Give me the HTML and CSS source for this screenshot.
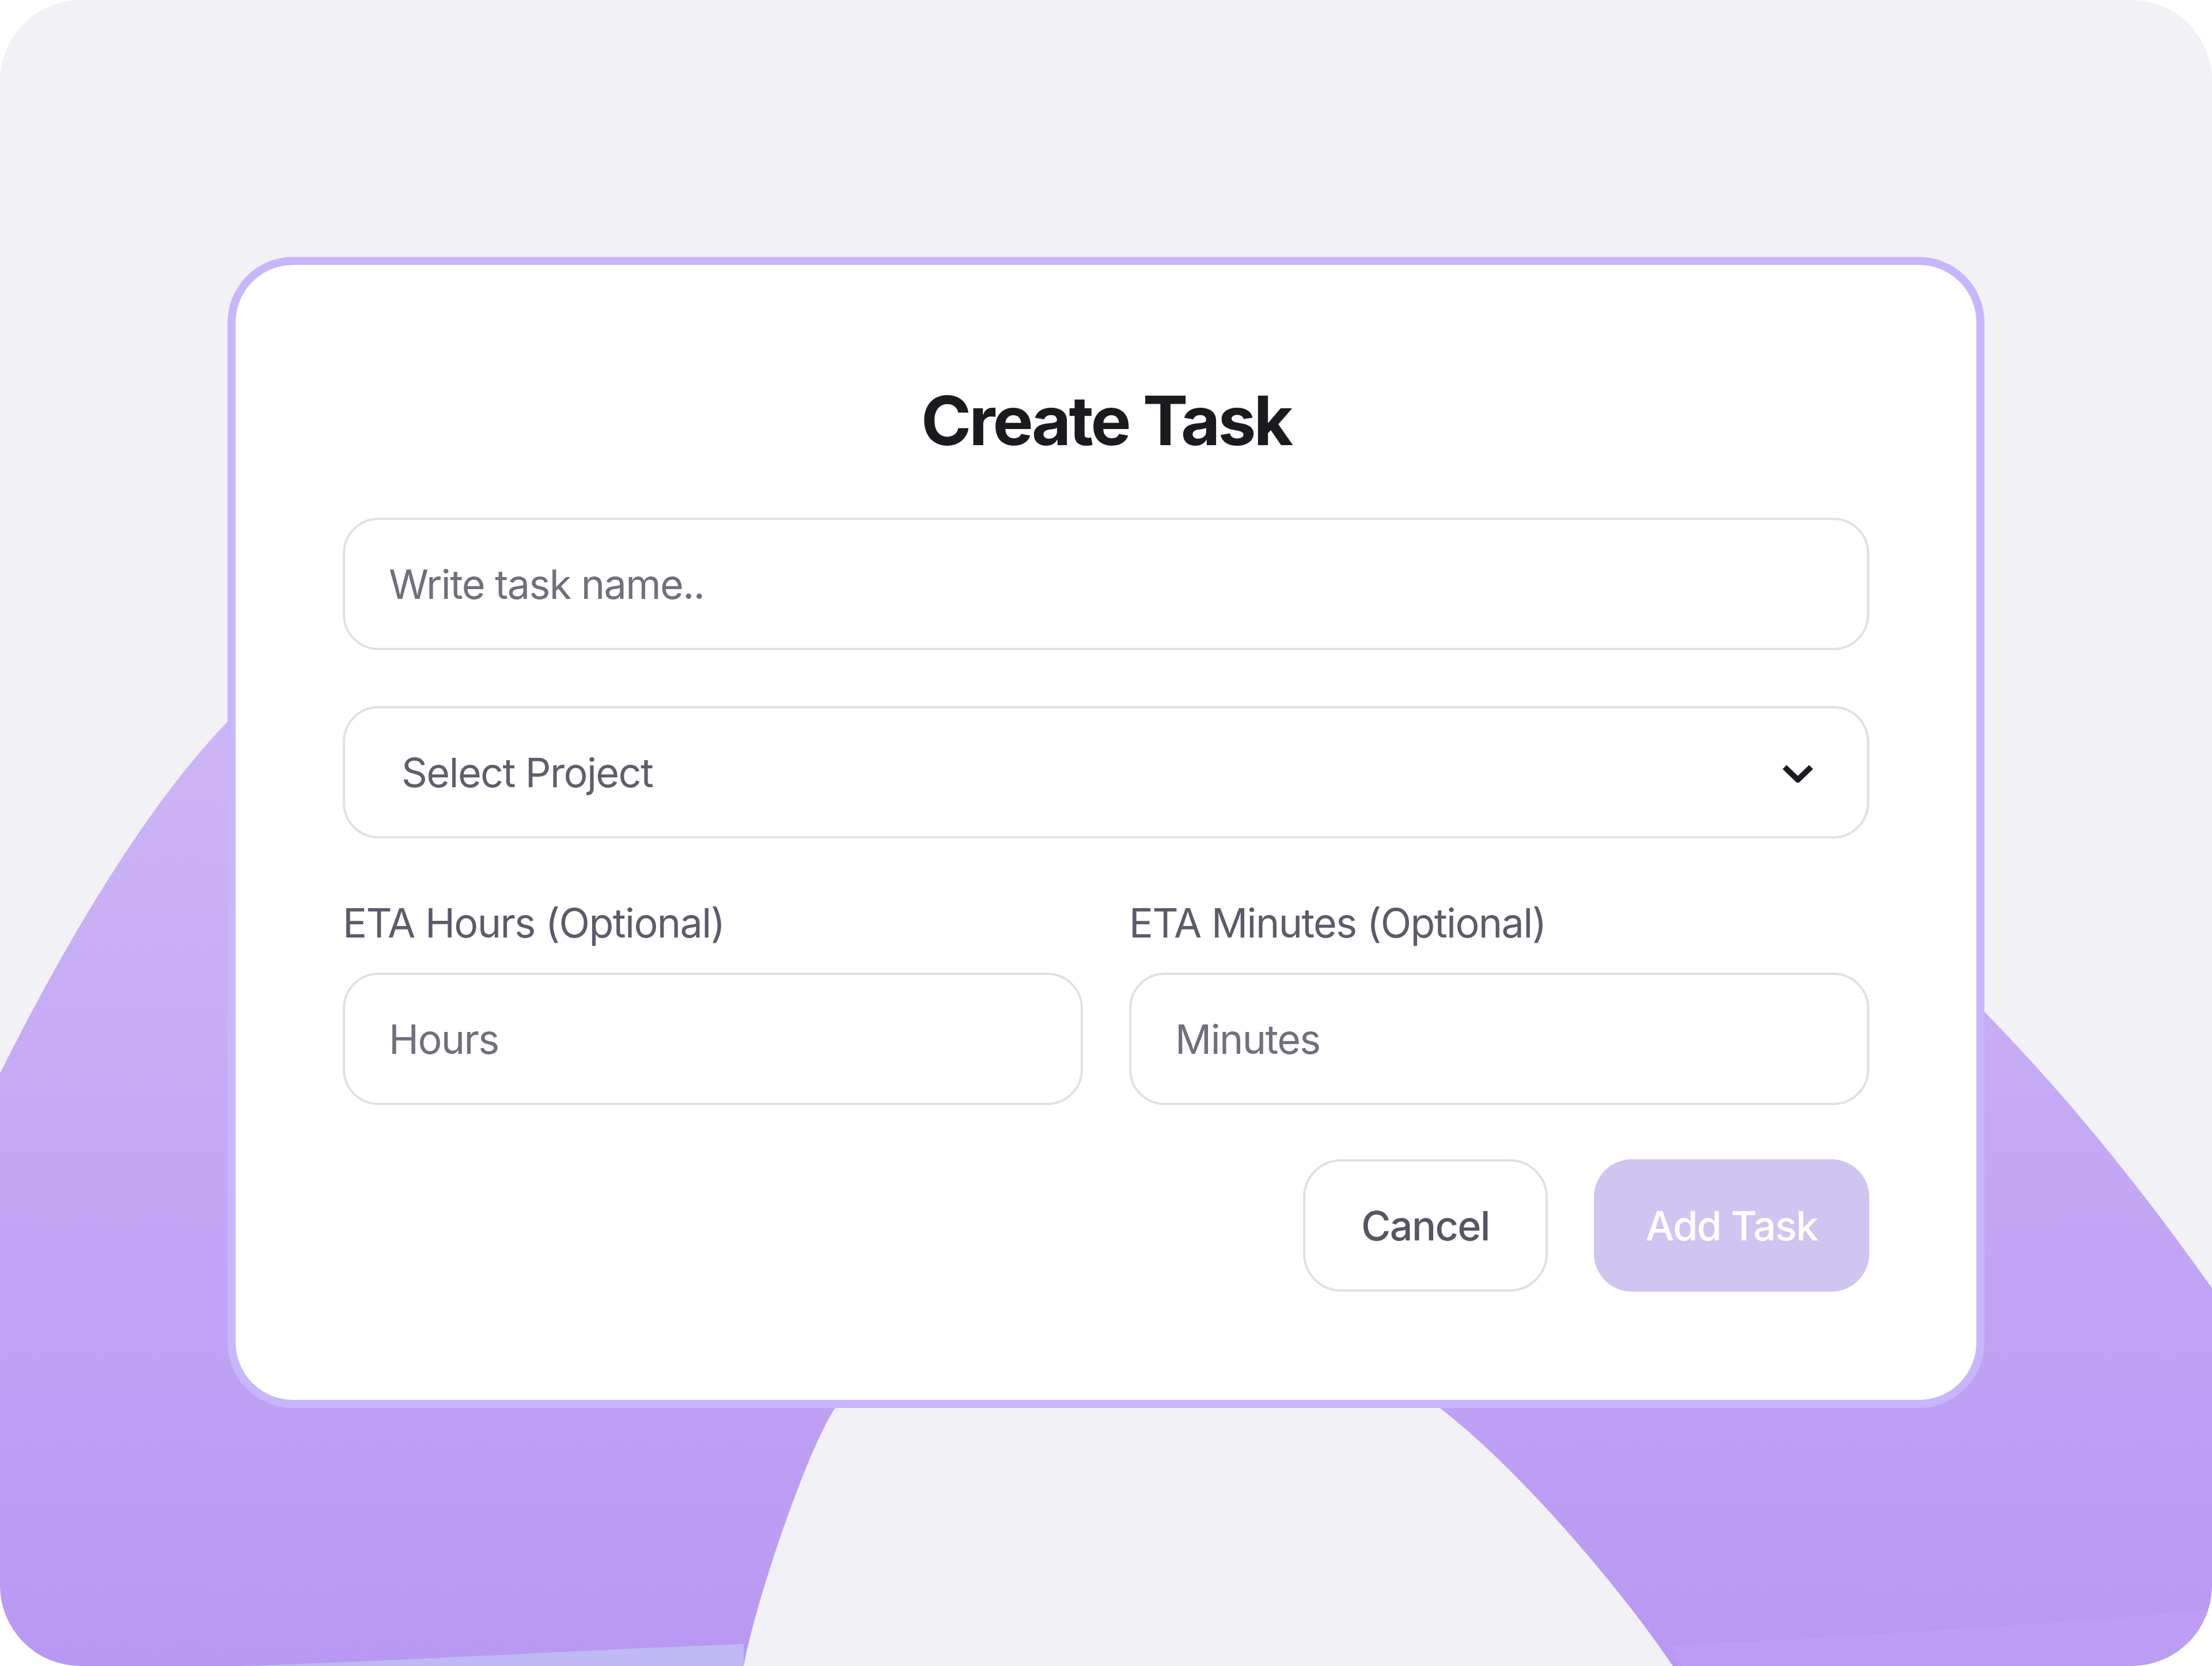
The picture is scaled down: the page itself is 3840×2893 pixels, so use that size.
FILE: index.html
```html
<!DOCTYPE html>
<html lang="en">
<head>
    <meta charset="UTF-8">
    <meta name="viewport" content="width=device-width, initial-scale=1.0">
    <title>Create Task</title>
    <link rel="stylesheet" href="styles.css">
</head>
<body>
    <div class="screen">
        <!-- purple backdrop shape behind the modal -->
        <svg class="backdrop" viewBox="0 0 3840 2893" xmlns="http://www.w3.org/2000/svg">
            <defs>
                <linearGradient id="blob" x1="0" y1="1200" x2="0" y2="2893" gradientUnits="userSpaceOnUse">
                    <stop offset="0" stop-color="#cdb6f6"/>
                    <stop offset="1" stop-color="#b998f3"/>
                </linearGradient>
            </defs>
            <path d="M0,1864 C130,1604 264,1390 394,1254 L430,1216 L700,1100 L3200,1100 L3420,1731 L3446,1758 C3577,1892 3709,2051 3840,2237 L3840,2893 L2904,2893 C2814,2759 2641,2555 2501,2446 L2470,2420 L2300,2300 L1600,2300 L1465,2420 L1449,2446 C1399,2523 1311,2783 1291,2893 L0,2893 Z" fill="url(#blob)"/>
            <path d="M2900,2858 C3200,2842 3550,2822 3840,2795 L3840,2893 L2920,2893 Z" fill="#c2a3f6" opacity="0.45"/>
            <path d="M420,2893 C750,2882 1020,2864 1291,2855 L1291,2893 Z" fill="#c1c3f6" opacity="0.75"/>
        </svg>

        <div class="modal">
            <h1>Create Task</h1>

            <input class="field" type="text" placeholder="Write task name..">

            <div class="select-wrap">
                <select class="field">
                    <option>Select Project</option>
                </select>
                <svg class="chevron" viewBox="0 0 56 32" xmlns="http://www.w3.org/2000/svg">
                    <polyline points="5,5 28,27 51,5" fill="none" stroke="#1c1c20" stroke-width="10" stroke-linejoin="miter"/>
                </svg>
            </div>

            <div class="row">
                <div class="col">
                    <label for="hours">ETA Hours (Optional)</label>
                    <input id="hours" class="field" type="text" placeholder="Hours">
                </div>
                <div class="col">
                    <label for="minutes">ETA Minutes (Optional)</label>
                    <input id="minutes" class="field" type="text" placeholder="Minutes">
                </div>
            </div>

            <div class="actions">
                <button class="btn btn-cancel">Cancel</button>
                <button class="btn btn-add">Add Task</button>
            </div>
        </div>
    </div>
</body>
</html>
```

FILE: styles.css
```css
* {
	box-sizing: border-box;
}
body {
	margin: 0;
	background-color: #fff;
	font-family: "Inter", "Liberation Sans", sans-serif;
}
.screen {
	position: relative;
	width: 3840px;
	height: 2893px;
	border-radius: 140px;
	overflow: hidden;
	background-color: #f2f1f6;
	padding-top: 446px;
}
.backdrop {
	position: absolute;
	left: 0;
	top: 0;
	width: 3840px;
	height: 2893px;
}
.modal {
	position: relative;
	width: 3050px;
	margin: 0 auto;
	background-color: #fff;
	border: 14px solid #c7b6fb;
	border-radius: 114px;
	padding: 211px 186px 188px;
}
h1 {
	margin: 0 0 110px;
	font-size: 118px;
	line-height: 1;
	font-weight: 700;
	text-align: center;
	color: #1b1b1f;
	letter-spacing: -4px;
}
.field {
	display: block;
	width: 100%;
	height: 230px;
	border: 4px solid #e0dfe6;
	border-radius: 62px;
	background-color: #fff;
	padding: 0 76px;
	font-family: inherit;
	font-size: 70px;
	letter-spacing: -1.6px;
	color: #5c5c6a;
	outline: none;
}
.field::placeholder {
	color: #6f6f7d;
}
.select-wrap {
	position: relative;
	margin-top: 97px;
}
.select-wrap select {
	appearance: none;
	-webkit-appearance: none;
	padding-left: 98px;
	color: #5e5e6c;
}
.chevron {
	position: absolute;
	right: 96px;
	top: 101px;
	width: 56px;
	height: 32px;
	pointer-events: none;
}
.row {
	display: grid;
	grid-template-columns: 1fr 1fr;
	gap: 80px;
	margin-top: 112px;
}
.row label {
	display: block;
	font-size: 70px;
	line-height: 1;
	letter-spacing: -1.6px;
	color: #5b5b6b;
	margin-bottom: 51px;
}
.actions {
	display: flex;
	justify-content: flex-end;
	gap: 80px;
	margin-top: 94px;
}
.btn {
	height: 230px;
	border-radius: 66px;
	font-family: inherit;
	font-size: 70px;
	font-weight: 500;
	letter-spacing: -1.6px;
	cursor: pointer;
}
.btn-cancel {
	width: 425px;
	background-color: #fff;
	border: 4px solid #e0dfe6;
	color: #555565;
}
.btn-add {
	width: 478px;
	background-color: #d0c5f1;
	border: none;
	color: #fff;
}
```
